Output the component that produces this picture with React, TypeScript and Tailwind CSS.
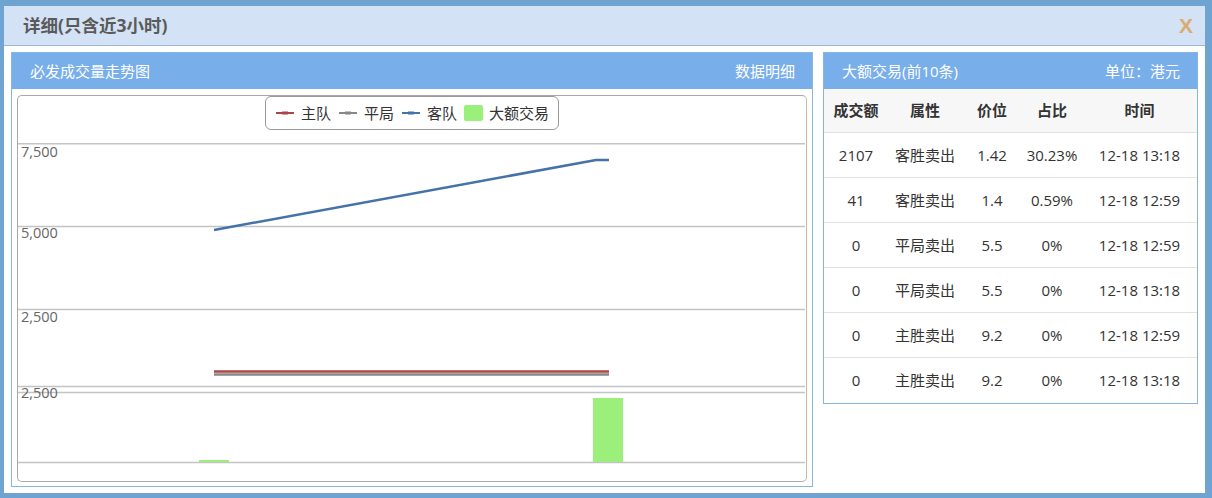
import React from "react";

const FONT = { fontFamily: '"Open Sans","Noto Sans CJK SC",sans-serif' };

function LegendLine({ color }: { color: string }) {
  return (
    <svg width="20" height="8" viewBox="0 0 20 8">
      <line x1="1" y1="4" x2="19" y2="4" stroke={color} strokeWidth="2" />
      <rect x="7" y="2.5" width="6" height="3" fill={color} />
    </svg>
  );
}

const rows = [
  ["2107", "客胜卖出", "1.42", "30.23%", "12-18 13:18"],
  ["41", "客胜卖出", "1.4", "0.59%", "12-18 12:59"],
  ["0", "平局卖出", "5.5", "0%", "12-18 12:59"],
  ["0", "平局卖出", "5.5", "0%", "12-18 13:18"],
  ["0", "主胜卖出", "9.2", "0%", "12-18 12:59"],
  ["0", "主胜卖出", "9.2", "0%", "12-18 13:18"],
];

function Chart() {
  const grid = "#c4c4c4";
  const lab = { fontSize: 14.5, fill: "#666", fontFamily: '"Open Sans",sans-serif' };
  return (
    <svg width="787" height="337" viewBox="0 0 787 337" className="block">
      <line x1="0" y1="0.75" x2="787" y2="0.75" stroke={grid} strokeWidth="1.5" />
      <line x1="0" y1="83.5" x2="787" y2="83.5" stroke={grid} strokeWidth="1.5" />
      <line x1="0" y1="166.5" x2="787" y2="166.5" stroke={grid} strokeWidth="1.5" />
      <line x1="0" y1="243.5" x2="787" y2="243.5" stroke={grid} strokeWidth="1.5" />
      <line x1="0" y1="249.5" x2="787" y2="249.5" stroke={grid} strokeWidth="1.5" />
      <line x1="0" y1="319.5" x2="787" y2="319.5" stroke={grid} strokeWidth="1.5" />
      <text x="3" y="13.5" style={lab}>7,500</text>
      <text x="3" y="94.5" style={lab}>5,000</text>
      <text x="3" y="178.5" style={lab}>2,500</text>
      <text x="3" y="254.5" style={lab}>2,500</text>
      <polyline points="196,87 578,17 591,17" fill="none" stroke="#4572a7" strokeWidth="2.5" />
      <line x1="196" y1="231.5" x2="591" y2="231.5" stroke="#888" strokeWidth="2.5" />
      <line x1="196" y1="228.5" x2="591" y2="228.5" stroke="#aa4643" strokeWidth="2.5" />
      <rect x="575" y="255" width="30" height="64" fill="#9af07a" />
      <rect x="181" y="317" width="30" height="2" fill="#9af07a" />
    </svg>
  );
}

export default function App() {
  return (
    <div
      className="w-[1212px] h-[498px] bg-[#6ea3d2] pt-[6px] pl-[4px] pr-[7px] pb-[5px]"
      style={FONT}
    >
      <div className="w-full h-full bg-white flex flex-col">
        <div className="h-[40px] bg-[#d3e2f4] border-b border-[#9bb9d6] flex items-center justify-between pl-[19px] pr-[12px] shrink-0">
          <span className="text-[17.5px] font-bold text-[#5a5a5a]">详细(只含近3小时)</span>
          <span className="text-[21px] font-bold text-[#dcab72]" style={{ fontFamily: '"Liberation Sans",sans-serif' }}>X</span>
        </div>
        <div className="flex pt-[6px] pl-[7px] gap-[10px]">
          {/* Left panel */}
          <div className="w-[802px] h-[435px] border border-[#86b6df] flex flex-col">
            <div className="h-[36px] bg-[#78aeea] flex items-center justify-between pl-[18px] pr-[17px] text-white text-[15px] shrink-0">
              <span>必发成交量走势图</span>
              <span>数据明细</span>
            </div>
            <div className="flex-1 pt-[6px] pl-[5px] pr-[5px] pb-[4px]">
              <div className="h-full border border-[#a9a9a9] border-r-[#c9b9ac] rounded-[5px] overflow-hidden flex flex-col">
                <div className="h-[47px] flex justify-center shrink-0">
                  <div className="h-[34px] border border-[#999] rounded-[6px] flex items-center px-[9px] gap-[6px] text-[15px] text-[#333]">
                    <LegendLine color="#aa4643" />
                    <span className="mr-[1px]">主队</span>
                    <LegendLine color="#888" />
                    <span className="mr-[1px]">平局</span>
                    <LegendLine color="#4572a7" />
                    <span className="mr-[1px]">客队</span>
                    <span className="w-[19px] h-[16px] bg-[#9af07a] rounded-[2px]" />
                    <span>大额交易</span>
                  </div>
                </div>
                <div className="flex-1">
                  <Chart />
                </div>
              </div>
            </div>
          </div>
          {/* Right panel */}
          <div className="w-[375px] h-[352px] border border-[#86b6df] flex flex-col">
            <div className="h-[36px] bg-[#78aeea] flex items-center justify-between pl-[18px] pr-[17px] text-white text-[15px] shrink-0">
              <span>大额交易(前10条)</span>
              <span>单位：港元</span>
            </div>
            <div className="grid grid-cols-[64px_74px_60px_60px_1fr] h-[43px] bg-[#f7f7f7] items-center text-center text-[15px] font-bold text-[#333]">
              <span>成交额</span>
              <span>属性</span>
              <span>价位</span>
              <span>占比</span>
              <span>时间</span>
            </div>
            {rows.map((r, i) => (
              <div
                key={i}
                className="grid grid-cols-[64px_74px_60px_60px_1fr] h-[45px] border-t border-[#e2e2e2] items-center text-center text-[15px] text-[#333]"
              >
                {r.map((c, j) => (
                  <span key={j}>{c}</span>
                ))}
              </div>
            ))}
          </div>
        </div>
      </div>
    </div>
  );
}
